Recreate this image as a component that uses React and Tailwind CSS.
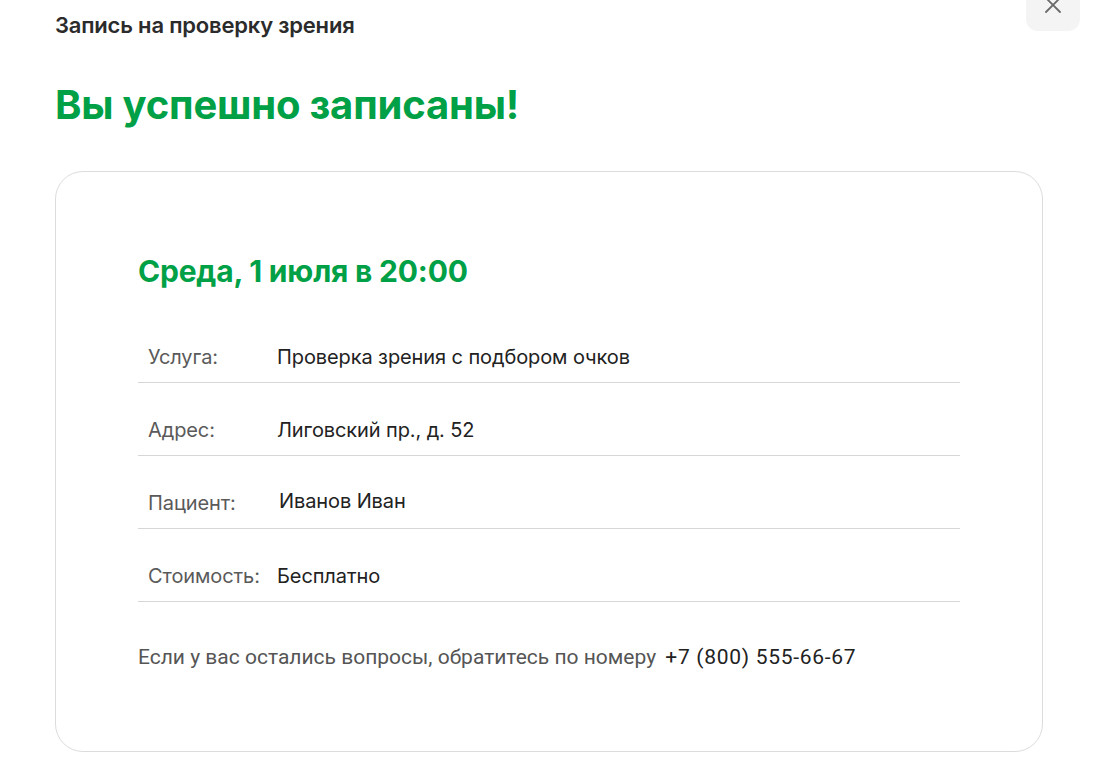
import React from "react";

const rows = [
  { label: "Услуга:", value: "Проверка зрения с подбором очков" },
  { label: "Адрес:", value: "Лиговский пр., д. 52" },
  { label: "Пациент:", value: "Иванов Иван", shift: true },
  { label: "Стоимость:", value: "Бесплатно" },
];

function CloseIcon() {
  return (
    <svg width="18" height="18" viewBox="0 0 18 18" fill="none">
      <path d="M2 2L16 16M16 2L2 16" stroke="#6b6b6b" strokeWidth="1.8" strokeLinecap="round" />
    </svg>
  );
}

export default function App() {
  return (
    <div
      className="relative w-[1100px] h-[764px] overflow-hidden bg-white"
      style={{ fontFamily: "Inter, 'Noto Sans', sans-serif" }}
    >
      <button className="absolute left-[1026px] top-[-23px] w-[54px] h-[54px] rounded-[12px] bg-[#f4f4f4] flex items-center justify-center pt-[2px]">
        <CloseIcon />
      </button>

      <div className="pl-[55px] pr-[57px] pt-[11px]">
        <div className="text-[22px] leading-[28px] font-semibold text-[#2b2b2b] tracking-[-0.2px]">
          Запись на проверку зрения
        </div>

        <h1 className="mt-[42px] text-[40px] leading-[48px] font-bold text-[#00a046] tracking-[-0.2px]">
          Вы успешно записаны!
        </h1>

        <div className="mt-[42px] w-[988px] rounded-[28px] border border-[#dcdcdc] px-[82px] pt-[81px] pb-[80px]">
          <div className="text-[30px] leading-[36px] font-bold text-[#00a046] tracking-[-0.2px]">
            Среда, 1 июля в 20:00
          </div>

          <div className="mt-[21px]">
            {rows.map((r) => (
              <div
                key={r.label}
                className="flex items-center h-[73px] pt-[35px] pb-[13px] border-b border-[#d6d6d6] text-[20px] leading-[24px]"
              >
                <span className="w-[139px] pl-[10px] text-[#5a5a5a] tracking-[-0.1px]">
                  {r.label}
                </span>
                <span className={`text-[#222] tracking-[-0.1px] ${r.shift ? "pl-[2px] -translate-y-[2px]" : ""}`}>
                  {r.value}
                </span>
              </div>
            ))}
          </div>

          <div
            className="mt-[41px] text-[21px] leading-[28px] text-[#555]"
            style={{ fontFamily: "Roboto, 'Noto Sans', sans-serif" }}
          >
            Если у вас остались вопросы, обратитесь по номеру{" "}
            <span className="ml-[4px] text-[#222] tracking-[0.7px]">+7 (800) 555-66-67</span>
          </div>
        </div>
      </div>
    </div>
  );
}
